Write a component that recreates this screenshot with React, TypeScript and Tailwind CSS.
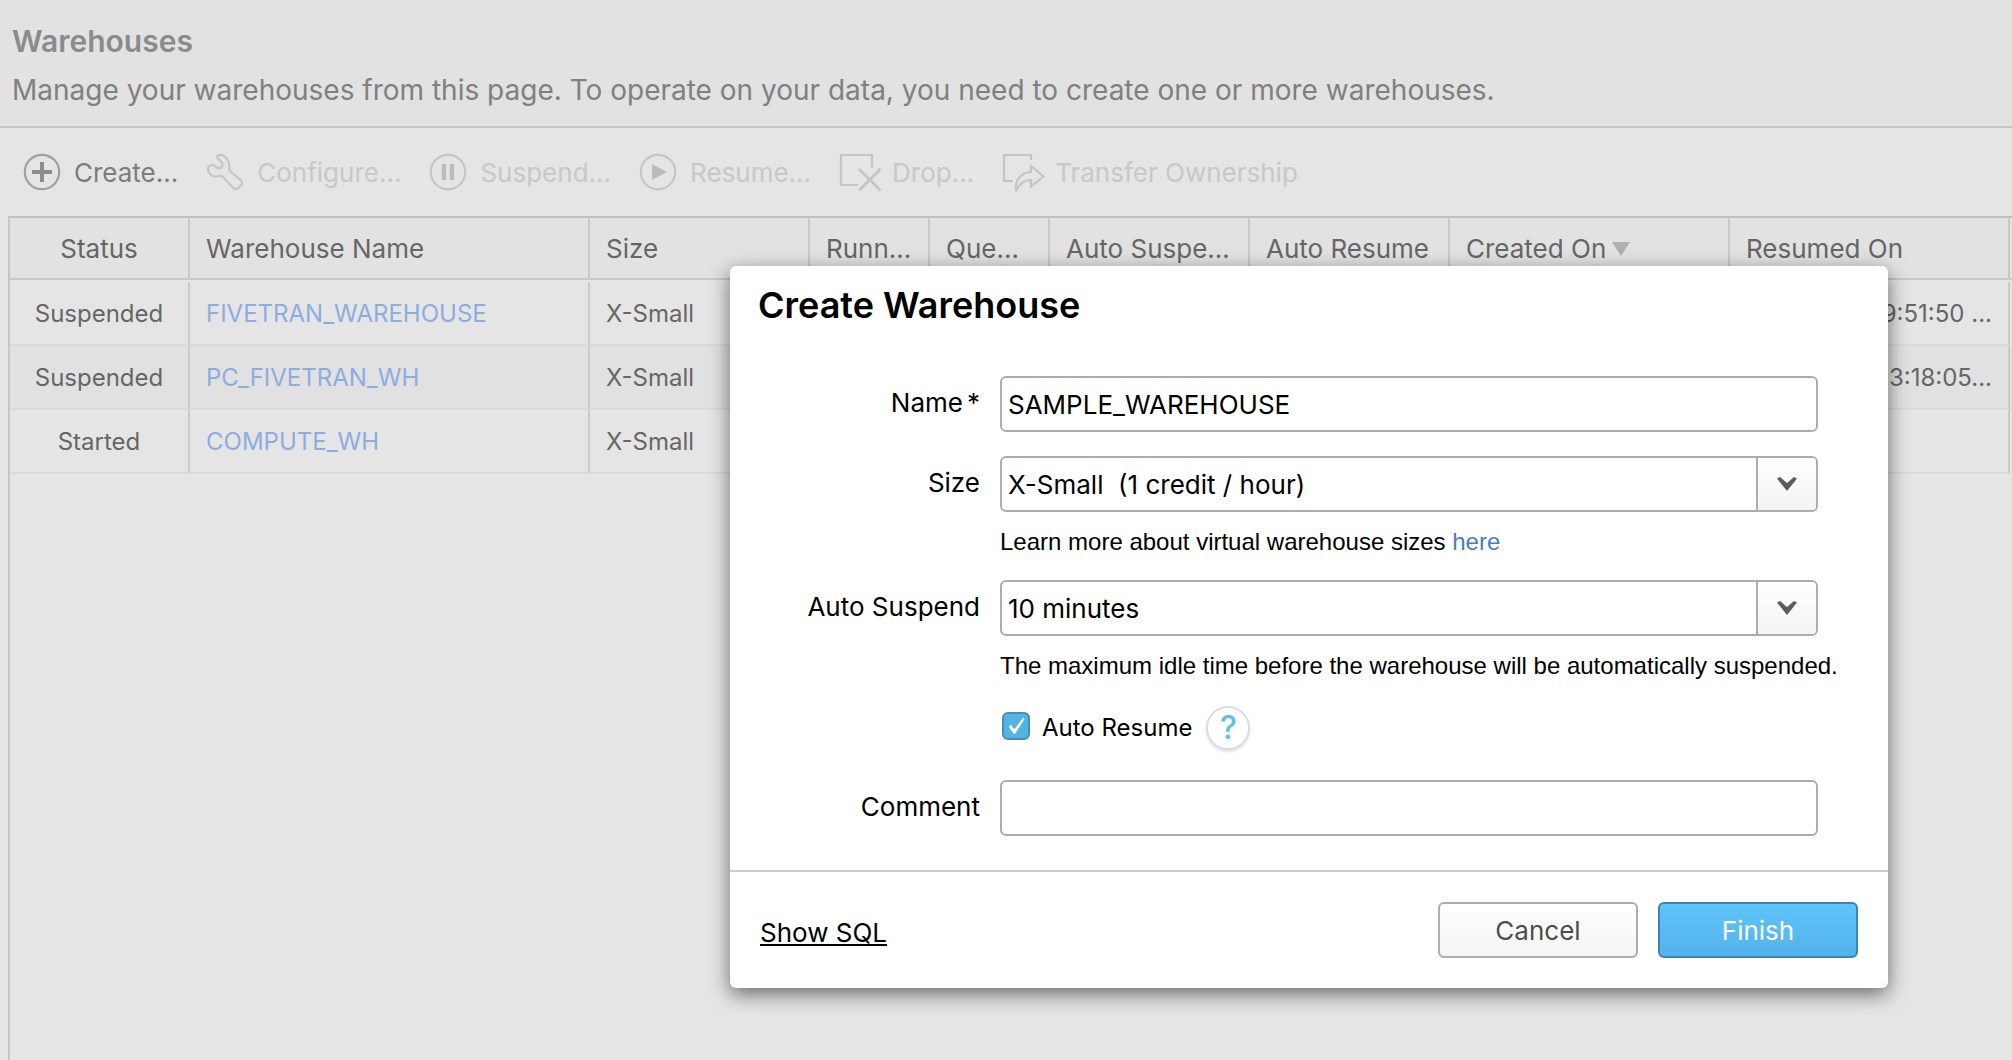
import { useState, type ReactNode } from "react";

function CreateIcon() {
  return (
    <svg viewBox="0 0 36 36" className="size-9 overflow-visible" fill="none" aria-hidden="true">
      <circle cx="18" cy="18" r="17.2" stroke="#a0a0a0" strokeWidth="2.2" />
      <path d="M18 8v20M8 18h20" stroke="#8c8c8c" strokeWidth="4" />
    </svg>
  );
}

function WrenchIcon() {
  return (
    <svg viewBox="0 0 110 110" className="size-9 overflow-visible" fill="none" aria-hidden="true">
      <path
        d="M7 38C3 41 2 46 4 52c5 14 19 20 36 15 4-1 6 0 9 3l29 32c6 6 11 7 17 2l9-9c5-5 4-10-2-16L71 53c-3-3-4-6-3-10C71 25 60 6 43 3c-7-1-12 1-12 6 0 3 2 5 5 7l8 9c5 5 4 11 0 15-5 5-11 4-16 0l-9-7c-4-3-8 1-12 5Z"
        stroke="#c6c6c6"
        strokeWidth="7"
        strokeLinejoin="round"
      />
    </svg>
  );
}

function SuspendIcon() {
  return (
    <svg viewBox="0 0 36 36" className="size-9 overflow-visible" fill="none" aria-hidden="true">
      <circle cx="18" cy="18" r="17.2" stroke="#c6c6c6" strokeWidth="2.2" />
      <path d="M14 10v16M22 10v16" stroke="#bcbcbc" strokeWidth="4.4" />
    </svg>
  );
}

function ResumeIcon() {
  return (
    <svg viewBox="0 0 36 36" className="size-9 overflow-visible" fill="none" aria-hidden="true">
      <circle cx="18" cy="18" r="17.2" stroke="#c6c6c6" strokeWidth="2.2" />
      <path d="M12 10v16l15-8Z" fill="#bcbcbc" />
    </svg>
  );
}

function DropIcon() {
  return (
    <svg viewBox="0 0 42 36" className="h-9 w-[42px] overflow-visible" fill="none" stroke="#c4c4c4" strokeWidth="2.2" aria-hidden="true">
      <path d="M18 31H1V1h31v13" />
      <path d="M19 15l21.500 21.500M40.500 15L19 36.500" strokeWidth="2.600" />
    </svg>
  );
}

function TransferIcon() {
  return (
    <svg viewBox="0 0 42 36" className="h-9 w-[42px] overflow-visible" fill="none" stroke="#c4c4c4" strokeWidth="2.2" aria-hidden="true">
      <path d="M10 27H1V1h27v5" />
      <path d="M28 12l12.500 10.500L28 32.500v-6.500C20 26 16 30 13 37c-1-11 4-18 15-19Z" />
    </svg>
  );
}

const actions: { label: string; icon: ReactNode; wide?: boolean; enabled?: boolean }[] = [
  { label: "Create...", icon: <CreateIcon />, enabled: true },
  { label: "Configure...", icon: <WrenchIcon /> },
  { label: "Suspend...", icon: <SuspendIcon /> },
  { label: "Resume...", icon: <ResumeIcon /> },
  { label: "Drop...", icon: <DropIcon />, wide: true },
  { label: "Transfer Ownership", icon: <TransferIcon />, wide: true },
];

const columns: { label: string; width: string; sorted?: boolean }[] = [
  { label: "Status", width: "w-[180px]" },
  { label: "Warehouse Name", width: "w-[400px]" },
  { label: "Size", width: "w-[220px]" },
  { label: "Runn...", width: "w-[120px]" },
  { label: "Que...", width: "w-[120px]" },
  { label: "Auto Suspe...", width: "w-[200px]" },
  { label: "Auto Resume", width: "w-[200px]" },
  { label: "Created On", width: "w-[280px]", sorted: true },
  { label: "Resumed On", width: "w-[280px]" },
];

const warehouses = [
  { status: "Suspended", name: "FIVETRAN_WAREHOUSE", size: "X-Small", resumed: "9:51:50 ..." },
  { status: "Suspended", name: "PC_FIVETRAN_WH", size: "X-Small", resumed: "3:18:05..." },
  { status: "Started", name: "COMPUTE_WH", size: "X-Small", resumed: "" },
];

const fieldBox = "h-14 w-full rounded-md border-2 border-[#adadad] bg-white px-1.5 text-[26px] text-black outline-none";
const labelText = "text-right text-[26px] leading-[54px]";
const cell = "h-16 truncate border-b-2 border-b-[#dadada] border-r-2 border-r-[#cbcbcb] p-0 pt-0.5";

function Dropdown({ id, options }: { id: string; options: string[] }) {
  return (
    <div className="relative">
      <select id={id} className={`${fieldBox} block appearance-none`}>
        {options.map((o) => (
          <option key={o}>{o}</option>
        ))}
      </select>
      <span className="pointer-events-none absolute inset-y-0.5 right-0.5 flex w-[60px] items-center justify-center rounded-r border-l-2 border-[#adadad] bg-linear-to-b from-white to-[#f4f4f4]">
        <svg viewBox="0 0 20 14" className="h-3.5 w-5" aria-hidden="true">
          <path d="M0 1.500 3 0l7 6L17 0l3 1.500L10 14Z" fill="#5c5c5c" />
        </svg>
      </span>
    </div>
  );
}

function CreateWarehouseDialog() {
  const [name, setName] = useState("SAMPLE_WAREHOUSE");
  const [comment, setComment] = useState("");
  const [autoResume, setAutoResume] = useState(true);

  return (
    <section
      role="dialog"
      aria-labelledby="dialog-title"
      className="absolute right-[124px] top-[266px] w-[1158px] rounded-md bg-white text-black shadow-[0_6px_20px_rgba(0,0,0,0.55)]"
    >
      <h2 id="dialog-title" className="px-7 pt-4 text-4xl font-semibold leading-[46px]">
        Create Warehouse
      </h2>

      <form
        className="mt-12 grid grid-cols-[250px_minmax(0,1fr)] gap-x-5 pb-[34px] pr-[70px]"
        onSubmit={(e) => e.preventDefault()}
      >
        <label htmlFor="name" className={labelText}>
          Name<span className="ml-1">*</span>
        </label>
        <input id="name" className={fieldBox} value={name} onChange={(e) => setName(e.target.value)} />

        <label htmlFor="size" className={`${labelText} mt-6`}>
          Size
        </label>
        <div className="mt-6">
          <Dropdown id="size" options={["X-Small\u00a0 (1 credit / hour)", "Small\u00a0 (2 credits / hour)"]} />
          <p className="mt-4 whitespace-nowrap font-['Liberation_Sans',sans-serif] text-2xl leading-7">
            Learn more about virtual warehouse sizes{" "}
            <a href="#sizes" className="text-[#4a7dbd]">
              here
            </a>
          </p>
        </div>

        <label htmlFor="auto-suspend" className={`${labelText} mt-6`}>
          Auto Suspend
        </label>
        <div className="mt-6">
          <Dropdown id="auto-suspend" options={["10 minutes", "5 minutes", "Never"]} />
          <p className="mt-4 whitespace-nowrap font-['Liberation_Sans',sans-serif] text-2xl leading-7">
            The maximum idle time before the warehouse will be automatically suspended.
          </p>
        </div>

        <div className="col-start-2 mt-[26px] flex h-11 items-center pl-0.5">
          <span className="relative mb-1 block size-7">
            <input
              id="auto-resume"
              type="checkbox"
              checked={autoResume}
              onChange={(e) => setAutoResume(e.target.checked)}
              className="block size-7 appearance-none rounded-md border-2 border-[#4590b3] bg-white checked:bg-[#52b4e0]"
            />
            {autoResume && (
              <svg viewBox="0 0 28 28" className="pointer-events-none absolute inset-0 size-7" aria-hidden="true">
                <path d="M6.500 14.500 9 12.800l3.500 4.400L21 6l1.500 1L13 21.800h-1.500Z" fill="#fff" />
              </svg>
            )}
          </span>
          <label htmlFor="auto-resume" className="ml-3 text-2xl">
            Auto Resume
          </label>
          <button
            type="button"
            aria-label="Auto Resume help"
            className="ml-3.5 flex size-11 items-center justify-center rounded-full border-2 border-[#dcdcdc] bg-white text-[32px] font-medium leading-none text-[#5cc0e8] shadow-[0_2px_3px_rgba(0,0,0,0.12)]"
          >
            ?
          </button>
        </div>

        <label htmlFor="comment" className={`${labelText} mt-[30px]`}>
          Comment
        </label>
        <div className="mt-[30px]">
          <input id="comment" className={`${fieldBox} block`} value={comment} onChange={(e) => setComment(e.target.value)} />
        </div>
      </form>

      <footer className="flex items-center gap-5 border-t-2 border-[#cbcbcb] px-[30px] py-[30px] text-[26px]">
        <a href="#sql" className="mr-auto pt-1 underline decoration-2 underline-offset-2 [text-decoration-skip-ink:none]">
          Show SQL
        </a>
        <button type="button" className="h-14 w-[200px] rounded-md border-2 border-[#adadad] bg-linear-to-b from-white to-[#f5f5f5] text-[#4d4d4d]">
          Cancel
        </button>
        <button type="button" className="h-14 w-[200px] rounded-md border-2 border-[#3d84b0] bg-linear-to-b from-[#5ec4fa] to-[#54b2ea] text-white">
          Finish
        </button>
      </footer>
    </section>
  );
}

export default function App() {
  return (
    <div className="relative flex min-h-screen flex-col overflow-hidden bg-[#e5e5e5] font-[Inter,sans-serif]">
      <header className="border-b-2 border-[#c6c6c6] bg-[#e2e2e2] px-3 pb-2 pt-5">
        <h1 className="text-3xl font-semibold leading-[42px] text-[#8b8b8b]">Warehouses</h1>
        <p className="text-[28px] leading-[56px] text-[#808080]">
          Manage your warehouses from this page. To operate on your data, you need to create one or more warehouses.
        </p>
      </header>

      <nav className="flex h-[88px] items-center gap-[29px] px-6 text-[26px]">
        {actions.map((a) => (
          <button
            key={a.label}
            type="button"
            disabled={!a.enabled}
            className={`flex items-center whitespace-nowrap ${a.wide ? "gap-2.5" : "gap-3.5"} ${a.enabled ? "text-[#7c7c7c]" : "text-[#c8c8c8]"}`}
          >
            {a.icon}
            {a.label}
          </button>
        ))}
      </nav>

      <main className="ml-2 flex-1 border-l-2 border-t-2 border-l-[#c6c6c6] border-t-[#bfbfbf]">
        <table className="w-full table-fixed border-separate border-spacing-0 text-left text-[#666]">
          <thead className="bg-[#e2e2e2] text-[26px]">
            <tr>
              {columns.map((c, i) => (
                <th
                  key={c.label}
                  scope="col"
                  className={`h-[62px] whitespace-nowrap border-b-2 border-r-2 border-[#c8c8c8] p-0 font-normal ${c.width} ${i === 0 ? "text-center" : "pl-4"}`}
                >
                  {c.label}
                  {c.sorted && (
                    <svg viewBox="0 0 18 14" className="ml-1.5 inline h-3.5 w-[18px] align-[2px]" aria-hidden="true">
                      <path d="M0 0h18L9 14Z" fill="#b0b0b0" />
                    </svg>
                  )}
                </th>
              ))}
              <td className="border-b-2 border-[#c8c8c8] p-0" />
            </tr>
          </thead>
          <tbody className="text-2xl before:block before:h-0.5 before:content-['']">
            {warehouses.map((w) => (
              <tr key={w.name} className="even:bg-[#e1e1e1]">
                <td className={`${cell} text-center`}>{w.status}</td>
                <td className={`${cell} pl-4`}>
                  <a href={`#${w.name}`} className="text-[#8dace4]">
                    {w.name}
                  </a>
                </td>
                <td className={`${cell} pl-4`}>{w.size}</td>
                <td className={cell} />
                <td className={cell} />
                <td className={cell} />
                <td className={cell} />
                <td className={cell} />
                <td className={`${cell} pr-4 text-right`}>{w.resumed}</td>
                <td className="p-0" />
              </tr>
            ))}
          </tbody>
        </table>
      </main>

      <CreateWarehouseDialog />
    </div>
  );
}
